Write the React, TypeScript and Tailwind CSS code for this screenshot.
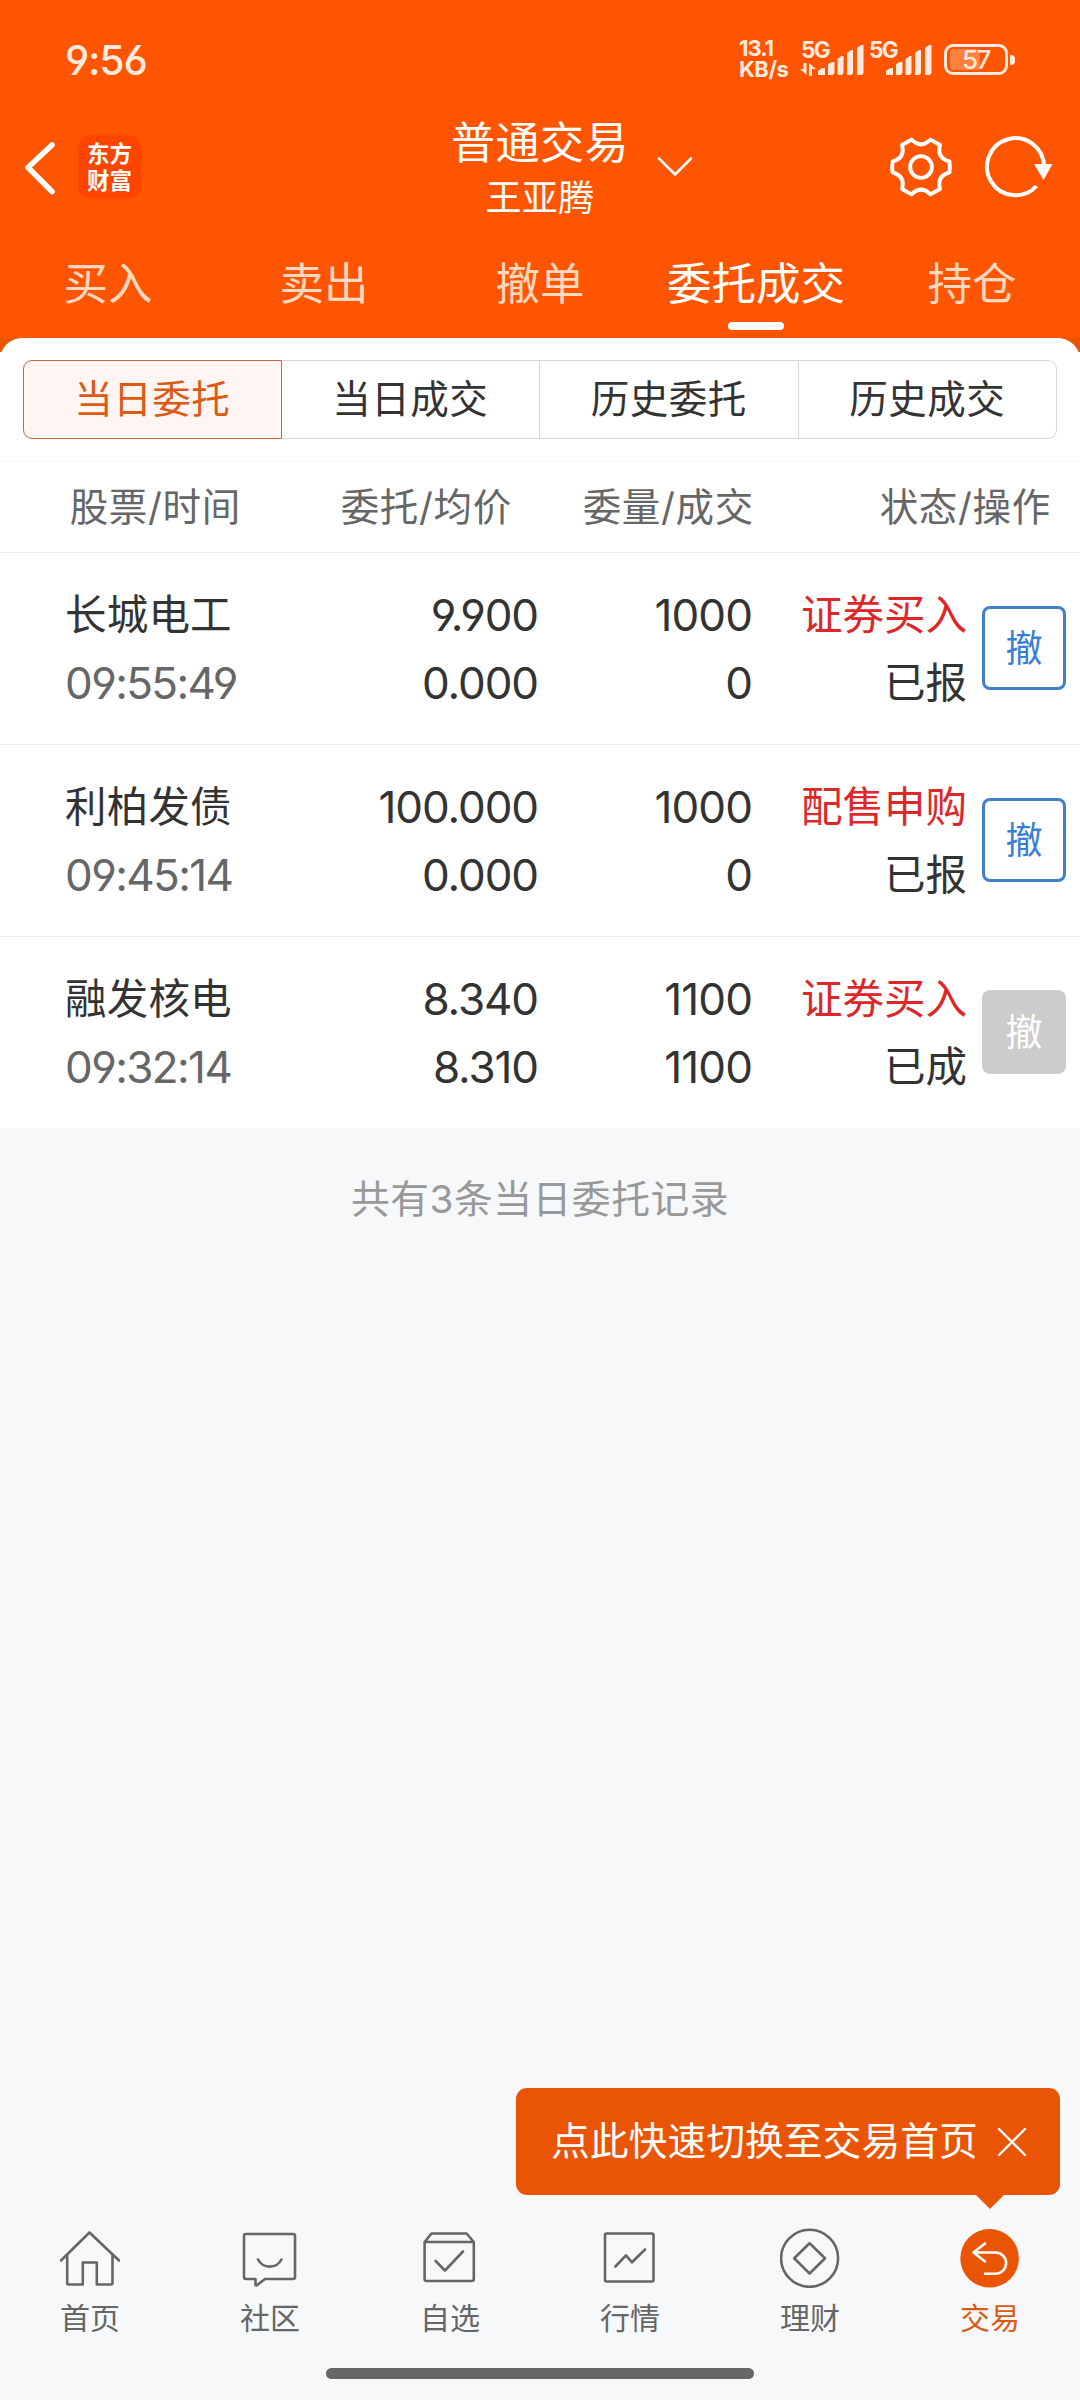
import React from 'react';

interface Order {
    name: string;
    time: string;
    price: string;
    avgPrice: string;
    amount: string;
    filled: string;
    action: string;
    status: string;
    cancelable: boolean;
}

const orders: Order[] = [
    { name: '长城电工', time: '09:55:49', price: '9.900', avgPrice: '0.000', amount: '1000', filled: '0', action: '证券买入', status: '已报', cancelable: true },
    { name: '利柏发债', time: '09:45:14', price: '100.000', avgPrice: '0.000', amount: '1000', filled: '0', action: '配售申购', status: '已报', cancelable: true },
    { name: '融发核电', time: '09:32:14', price: '8.340', avgPrice: '8.310', amount: '1100', filled: '1100', action: '证券买入', status: '已成', cancelable: false },
];

const tabs = ['买入', '卖出', '撤单', '委托成交', '持仓'];
const segments = ['当日委托', '当日成交', '历史委托', '历史成交'];

const SignalBars = () => (
    <svg width="46" height="30" viewBox="0 0 46 30" fill="#ffeadd" className="shrink-0">
        <path d="M0 30v-4l4-3h3v7z" />
        <path d="M10 19l4-2h2.5v11l-1.5 2H10z" />
        <path d="M19.5 14l4-3h2v17l-1.5 2h-4.5z" />
        <path d="M29 8l4-3h2v23l-1.5 2H29z" />
        <path d="M39 3l4-3h2.5v28l-1.5 2h-5z" />
    </svg>
);

const StatusBar = () => (
    <div className="h-[102px] flex items-start pl-[65px] pr-[65px] text-[#ffeadd]">
        <div className="mt-[35px] text-[41px] leading-[50px] font-medium tracking-[-1.2px]">9:56</div>
        <div className="ml-auto mt-[38px] w-[61px] text-[22px] leading-[21px] font-bold">
            <div className="tracking-[-1px]">13.1</div>
            <div className="tracking-[-0.5px]">KB/s</div>
        </div>
        <div className="mt-[39px] w-[69px] h-[40px] relative">
            <span className="text-[22.5px] leading-[21px] font-bold block pl-px tracking-[-1.6px]">5G</span>
            <svg width="16" height="13" viewBox="0 0 16 13" fill="#ffeadd" className="absolute left-0 top-[24px]">
                <path d="M3.5 0h3v12L0 6h3.5zM9 13V0l7 6h-4v7z" />
            </svg>
            <span className="absolute left-[18px] top-[6px]"><SignalBars /></span>
        </div>
        <div className="mt-[39px] w-[75px] h-[40px] relative">
            <span className="text-[22.5px] leading-[21px] font-bold block tracking-[-1.6px]">5G</span>
            <span className="absolute left-[17px] top-[6px]"><SignalBars /></span>
        </div>
        <div className="mt-[44px] flex items-center">
            <div className="relative w-[64px] h-[31px] rounded-[9px] border-[3px] border-[#ffeadd] flex items-center justify-center">
                <div className="absolute left-[3px] top-[2px] w-[30px] h-[21px] rounded-[4px] bg-[#ff8040]"></div>
                <span className="relative text-[26px] leading-[25px] font-medium tracking-[-1.5px]">57</span>
            </div>
            <div className="ml-[2px] w-[5px] h-[10px] rounded-r-[4px] rounded-l-[1px] bg-[#ffeadd]"></div>
        </div>
    </div>
);

const TitleBar = () => (
    <div className="h-[130px] flex text-white">
        <div className="w-[440px] shrink-0 flex items-start pl-[23px] pt-[33px]">
            <svg width="34" height="64" viewBox="0 0 34 64" fill="none" stroke="#fff" strokeWidth="5.5" strokeLinecap="round" strokeLinejoin="round">
                <path d="M29 10L5 32.5l24 24" />
            </svg>
            <div className="ml-[21px] w-[63px] h-[64px] rounded-[13px] bg-[#ff4400] flex flex-col items-center justify-center text-[22.5px] leading-[27px] font-bold">
                <span>东方</span>
                <span>财富</span>
            </div>
        </div>
        <div className="w-[200px] shrink-0 text-center whitespace-nowrap">
            <div className="mt-[8px] text-[44px] leading-[66px] tracking-[0.5px]">普通交易</div>
            <div className="mt-[-5px] text-[36px] leading-[54px] tracking-[0.3px]">王亚腾</div>
        </div>
        <div className="w-[440px] shrink-0 flex items-start pl-[16px] pr-[26px]">
            <svg width="38" height="22" viewBox="0 0 38 22" fill="none" stroke="#fff" strokeWidth="2.6" strokeLinecap="round" strokeLinejoin="round" className="mt-[53px]">
                <path d="M3 3.5L19 19.5 35 3.5" />
            </svg>
            <svg width="68" height="68" viewBox="-36 -36 72 72" fill="none" stroke="#fff" strokeWidth="4.2" strokeLinejoin="round" className="ml-auto mt-[31px]">
                <path d="M-10 -29Q0 -19 10 -29L20.1 -23.2Q16.5 -9.5 30.1 -5.8Q31 0 30.1 5.8Q16.5 9.5 20.1 23.2L10 29Q0 19 -10 29L-20.1 23.2Q-16.5 9.5 -30.1 5.8Q-31 0 -30.1 -5.8Q-16.5 -9.5 -20.1 -23.2Z" />
                <circle r="11.5" />
            </svg>
            <svg width="70" height="68" viewBox="0 0 70 68" fill="none" stroke="#fff" strokeWidth="4" className="ml-[29px] mt-[31px]">
                <path d="M52.5 53A28.5 28.5 0 1 1 60 34" />
                <path d="M50 31h18.5l-9 16z" fill="#fff" stroke="none" />
            </svg>
        </div>
    </div>
);

const TabBar = () => (
    <div className="h-[106px] grid grid-cols-5">
        {tabs.map((tab) => (
            <div key={tab} className="flex flex-col items-center">
                <span className={`mt-[19px] text-[44.5px] leading-[66px] whitespace-nowrap ${tab === '委托成交' ? 'text-white' : 'text-[#ffd8c0]'}`}>{tab}</span>
                {tab === '委托成交' && <span className="mt-[5px] w-[56px] h-[8px] rounded-[4px] bg-white"></span>}
            </div>
        ))}
    </div>
);

const SegmentControl = () => (
    <div className="h-[110px] px-[23px] pt-[8px] border-b border-[#f5f5f6]">
        <div className="h-[79px] grid grid-cols-4 text-[38.5px] tracking-[0.5px]">
            {segments.map((label, i) => (
                <div
                    key={label}
                    className={`flex items-center justify-center border ${
                        i === 0
                            ? 'rounded-l-[9px] border-[#c4683c] bg-[#fff6f3] text-[#dc5a14]'
                            : i === 3
                                ? 'rounded-r-[9px] border-[#d5d8da] border-l-0 text-[#333]'
                                : 'border-[#d5d8da] border-l-0 text-[#333]'
                    }`}
                >
                    {label}
                </div>
            ))}
        </div>
    </div>
);

const OrderRow: React.FC<{ order: Order }> = ({ order }) => (
    <div className="h-[192px] flex pl-[65px] pr-[14px] border-t border-[#ededed] text-[41.5px] leading-[68px] text-[#333] whitespace-nowrap">
        <div className="w-[230px] mt-[28px]">
            <div className="tracking-[0.2px]">{order.name}</div>
            <div className="text-[#666] text-[44px] tracking-[-1.6px]">{order.time}</div>
        </div>
        <div className="w-[243px] mt-[28px] text-right text-[44px] tracking-[-1.1px]">
            <div>{order.price}</div>
            <div>{order.avgPrice}</div>
        </div>
        <div className="w-[214px] mt-[28px] text-right text-[44px] tracking-[-0.9px]">
            <div>{order.amount}</div>
            <div>{order.filled}</div>
        </div>
        <div className="w-[215px] mt-[28px] text-right">
            <div className="text-[#dc2828]">{order.action}</div>
            <div>{order.status}</div>
        </div>
        <button
            className={`ml-auto mt-[53px] w-[84px] h-[84px] rounded-[8px] flex items-center justify-center text-[37px] leading-none ${
                order.cancelable ? 'border-[3px] border-[#4080c8] text-[#3a7fd5]' : 'bg-[#ccc] text-white'
            }`}
        >
            撤
        </button>
    </div>
);

const icons: Record<string, React.ReactNode> = {
    首页: (
        <path d="M1 32.5L29.5 4.500 59 32.5M7.2 26.500V55a1.500 1.500 0 0 0 1.500 1.500H22.800V34.500H36.800V56.500H51a1.500 1.500 0 0 0 1.500-1.500V26.500" />
    ),
    社区: (
        <>
            <path d="M6 6H53a2 2 0 0 1 2 2V49a2 2 0 0 1-2 2H25L16.500 57.500 15.500 57V51H6a2 2 0 0 1-2-2V8a2 2 0 0 1 2-2z" />
            <path d="M18 31.500C23 41 36.500 41 41.500 31.500" />
        </>
    ),
    自选: (
        <>
            <path d="M4.6 14L11.500 5.500H46.600L53.800 14V51a2 2 0 0 1-2 2H6.600a2 2 0 0 1-2-2zM4.600 14H53.800" />
            <path d="M15.600 33L25 42.500 43 23.500" />
        </>
    ),
    行情: (
        <>
            <rect x="5" y="5.5" width="48.5" height="48" rx="1.5" />
            <path d="M15.400 38.500L26 27.300 32 34.300 45 21.500" />
        </>
    ),
    理财: (
        <>
            <circle cx="29.6" cy="30.3" r="28.5" />
            <path d="M29.600 15.300L45 30.300 29.600 45.500 14.200 30.300z" />
        </>
    ),
    交易: (
        <>
            <circle cx="29.6" cy="30.3" r="29.3" fill="#e95504" stroke="none" />
            <path d="M25 15.500L13.500 24.500 25 33.500M13.500 24.500H35.500a10.500 10.500 0 0 1 0 21.200H25" stroke="#fff" />
        </>
    ),
};

const BottomNav = () => (
    <div className="relative h-[172px] grid grid-cols-6">
        {Object.keys(icons).map((label) => (
            <div key={label} className={`flex flex-col items-center text-[30px] leading-[44px] ${label === '交易' ? 'text-[#dc5a14]' : 'text-[#666]'}`}>
                <svg width="60" height="60" viewBox="0 0 60 60" fill="none" stroke={label === '交易' ? '#fff' : '#666'} strokeWidth="2.6" strokeLinecap="round" strokeLinejoin="round">
                    {icons[label]}
                </svg>
                <span className="mt-[8px]">{label}</span>
            </div>
        ))}
        <div className="absolute left-[326px] bottom-[21px] w-[428px] h-[11px] rounded-full bg-[#666]"></div>
    </div>
);

const SwitchTip = () => (
    <div className="self-end mr-[20px] relative w-[544px] h-[107px] mb-[33px] rounded-[11px] bg-[#e95504] text-white flex items-center pl-[35px]">
        <span className="text-[38.8px] whitespace-nowrap">点此快速切换至交易首页</span>
        <svg width="30" height="30" viewBox="0 0 30 30" stroke="#fff" strokeWidth="2.4" strokeLinecap="round" className="ml-[19px]">
            <path d="M2 2l26 26M28 2L2 28" />
        </svg>
        <svg width="28" height="14" viewBox="0 0 28 14" fill="#e95504" className="absolute right-[56px] top-full">
            <path d="M0 0h28L14 14z" />
        </svg>
    </div>
);

export default function App() {
    return (
        <div className="w-[1080px] h-[2400px] overflow-hidden flex flex-col bg-[#f7f8fa] font-[Inter,'Noto_Sans_CJK_SC',sans-serif] [font-feature-settings:'cv03','cv04']">
            <header className="bg-[#ff5500]">
                <StatusBar />
                <TitleBar />
                <TabBar />
            </header>
            <main className="flex-1 flex flex-col">
                <div className="h-[14px] shrink-0 overflow-hidden bg-[#e95504]">
                    <div className="h-11 rounded-t-[22px] bg-white"></div>
                </div>
                <div className="bg-white">
                    <SegmentControl />
                    <div className="h-[90px] flex items-center pt-[1px] text-[38.5px] tracking-[0.7px] text-[#666] whitespace-nowrap">
                        <div className="w-[241px] text-right">股票/时间</div>
                        <div className="w-[271px] text-right">委托/均价</div>
                        <div className="w-[242px] text-right">委量/成交</div>
                        <div className="w-[297px] text-right">状态/操作</div>
                    </div>
                    {orders.map((order) => (
                        <OrderRow key={order.name} order={order} />
                    ))}
                </div>
                <p className="mt-[42px] text-center text-[38.8px] leading-[58px] tracking-[0.5px] text-[#999]">共有3条当日委托记录</p>
            </main>
            <SwitchTip />
            <BottomNav />
        </div>
    );
}
